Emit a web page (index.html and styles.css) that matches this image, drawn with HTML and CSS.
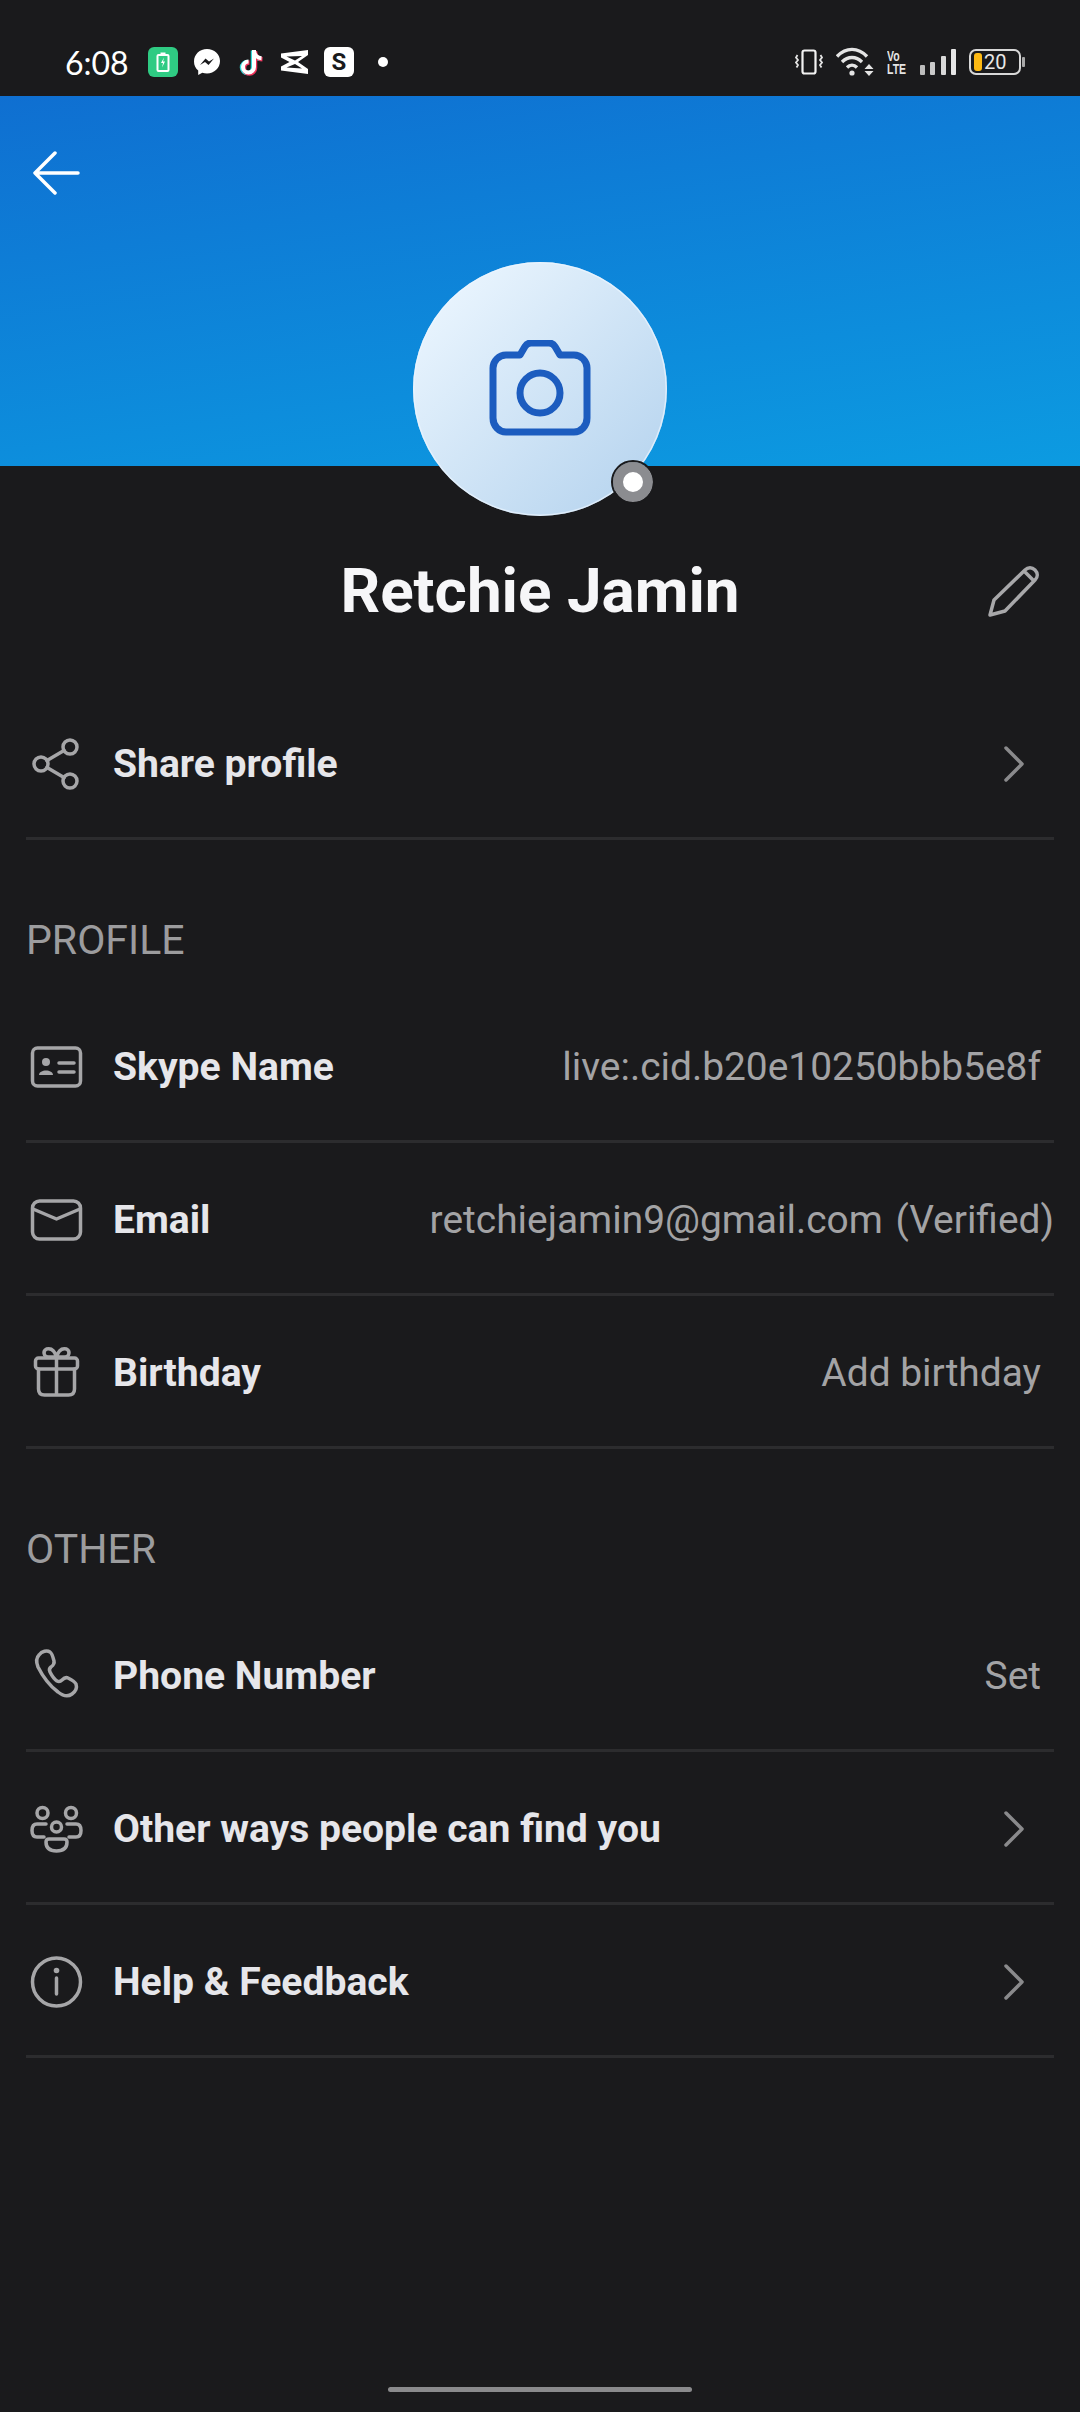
FILE: index.html
```html
<!DOCTYPE html>
<html lang="en">
<head>
    <meta charset="UTF-8">
    <meta name="viewport" content="width=device-width, initial-scale=1.0">
    <title>Profile</title>
    <link rel="stylesheet" href="styles.css">
</head>
<body>
    <div class="status-bar">
        <span class="time">6:08</span>
        <div class="status-apps">
            <svg class="app-icon" viewBox="0 0 30 30">
                <rect width="30" height="30" rx="6" fill="#2fcb83"/>
                <rect x="9.500" y="8" width="11" height="16" rx="1" fill="none" stroke="#fff" stroke-width="2"/>
                <rect x="12.500" y="5.500" width="5" height="2" fill="#fff"/>
                <path d="M16 10.500l-3 5.500h2l-1 4.500 3-6h-2z" fill="#fff"/>
            </svg>
            <svg class="app-icon" viewBox="0 0 30 30">
                <path d="M15 2C7.700 2 2 7.400 2 14.400c0 3.700 1.500 6.900 4.200 9.100V28l4.100-2.300c1.500.4 3 .7 4.700.7 7.300 0 13-5.400 13-12.400S22.300 2 15 2z" fill="#fff"/>
                <path d="M8 18l5.500-6.500 3.500 3 5-3-5.500 6.500-3.500-3z" fill="#1a1a1c"/>
            </svg>
            <svg class="app-icon" viewBox="0 0 30 30">
                <path d="M18 3v17a5.500 5.500 0 1 1-5.500-5.500M18 4c.5 4 3.500 7 7.500 7.300" fill="none" stroke="#33d9dc" stroke-width="4.500" transform="translate(-1 .6)"/>
                <path d="M18 3v17a5.500 5.500 0 1 1-5.500-5.500M18 4c.5 4 3.500 7 7.500 7.300" fill="none" stroke="#f0325a" stroke-width="4.500" transform="translate(1 1)"/>
                <path d="M18 3v17a5.500 5.500 0 1 1-5.500-5.500M18 4c.5 4 3.500 7 7.500 7.300" fill="none" stroke="#fff" stroke-width="4"/>
            </svg>
            <svg class="app-icon" viewBox="0 0 30 30">
                <path d="M1 6.500l27-3.500v5l-10 7 10 7v5L1 23.500v-4l8.500-4.500L1 10.500zM6.500 9.500l8.500 4 7-4.500zM6.500 20.500l15.500 1-7-4.500z" fill="#fff" fill-rule="evenodd"/>
            </svg>
            <span class="s-tile">S</span>
            <span class="status-dot"></span>
        </div>
        <div class="status-system">
            <svg class="sys-vibrate" viewBox="0 0 28 26">
                <rect x="7.500" y="1.500" width="13" height="23" rx="2" fill="none" stroke="#f2f2f2" stroke-width="2.200"/>
                <path d="M2.500 6l-1.500 2.500 2 2.500-2 2.500 2 2.500-1.500 2.500M25.500 6l1.500 2.500-2 2.500 2 2.500-2 2.500 1.500 2.500" fill="none" stroke="#e4e4e4" stroke-width="1.800"/>
            </svg>
            <svg class="sys-wifi" viewBox="0 0 38 30">
                <path d="M1 9.500c9-9.500 21-9.500 30 0M6 15c6-6 14-6 20 0M11 20.500c3-3 7-3 10 0" fill="none" stroke="#e4e4e4" stroke-width="3.400"/>
                <circle cx="16" cy="26" r="2.600" fill="#e4e4e4"/>
                <path d="M33 17l4.500 5h-9zM33 29l-4.500-5h9z" fill="#e4e4e4"/>
            </svg>
            <span class="volte">Vo<br>LTE</span>
            <div class="signal">
                <span class="signal-bar bar-1"></span>
                <span class="signal-bar bar-2"></span>
                <span class="signal-bar bar-3"></span>
                <span class="signal-bar bar-4"></span>
            </div>
            <div class="battery">
                <span class="battery-fill"></span>
                <span class="battery-level">20</span>
            </div>
        </div>
    </div>

    <div class="header">
        <svg class="back-icon" viewBox="0 0 48 44">
            <path d="M46 22H3M23 2L3 22l20 20" fill="none" stroke="#fff" stroke-width="3.500" stroke-linecap="round" stroke-linejoin="round"/>
        </svg>
        <div class="avatar">
            <svg class="camera-icon" viewBox="0 0 102 96">
                <path d="M31 15l5-8.500c1.500-2.500 3.500-3.500 6-3.500h18c2.500 0 4.500 1 6 3.500l5 8.500h14c7 0 13 6 13 13v50c0 8-6 14-13 14H17C10 92 4 86 4 78V28c0-7 6-13 13-13z" fill="none" stroke="#1c5cbf" stroke-width="7" stroke-linejoin="round"/>
                <circle cx="51" cy="53" r="20" fill="none" stroke="#1c5cbf" stroke-width="7"/>
            </svg>
        </div>
        <span class="presence"></span>
    </div>

    <div class="name-row">
        <h1 class="name">Retchie Jamin</h1>
        <svg class="edit-icon" viewBox="0 0 52 52">
            <path d="M2 50l4-15L37 5c3-3 7-3 10 0s3 7 0 10L17 46zM36 6l10 10" fill="none" stroke="#a8a8aa" stroke-width="3.500" stroke-linejoin="round"/>
        </svg>
    </div>

    <div class="row">
        <svg class="row-icon" viewBox="0 0 60 60">
            <circle cx="15" cy="30" r="7" class="line"/>
            <circle cx="44" cy="13" r="7" class="line"/>
            <circle cx="44" cy="47" r="7" class="line"/>
            <path d="M21 26.500l17-10M21 33.500l17 10" class="line"/>
        </svg>
        <span class="row-label">Share profile</span>
        <svg class="chevron" viewBox="0 0 20 36"><path d="M2 2l16 16L2 34"/></svg>
    </div>

    <div class="section-title">PROFILE</div>

    <div class="row">
        <svg class="row-icon" viewBox="0 0 60 60">
            <rect x="6.500" y="11" width="48" height="38" rx="5" class="line"/>
            <circle cx="20" cy="25" r="4" class="fill"/>
            <path d="M13 38c0-6 14-6 14 0z" class="fill"/>
            <path d="M33 26h15M33 35h15" class="line"/>
        </svg>
        <span class="row-label">Skype Name</span>
        <span class="row-value">live:.cid.b20e10250bbb5e8f</span>
    </div>

    <div class="row">
        <svg class="row-icon" viewBox="0 0 60 60">
            <rect x="6.500" y="11" width="48" height="38" rx="7" class="line"/>
            <path d="M7 19l23.500 10L54 19" class="line"/>
        </svg>
        <span class="row-label">Email</span>
        <span class="row-value row-value-wide">retchiejamin9@gmail.com (Verified)</span>
    </div>

    <div class="row">
        <svg class="row-icon" viewBox="0 0 60 60">
            <rect x="9.500" y="15" width="42" height="11" rx="3" class="line"/>
            <path d="M12.500 26v20c0 4 2 6 6 6h24c4 0 6-2 6-6V26M30.500 15v37" class="line"/>
            <path d="M30.500 14c-2-7-6-9-10-8-4 2-3 8 2 8zM30.500 14c2-7 6-9 10-8 4 2 3 8-2 8z" class="line"/>
        </svg>
        <span class="row-label">Birthday</span>
        <span class="row-value">Add birthday</span>
    </div>

    <div class="section-title">OTHER</div>

    <div class="row">
        <svg class="row-icon" viewBox="0 0 60 60">
            <path d="M13 9c3-4 8-5 11-3 2 1 3 5 4 9 .5 2-.5 4-3 6-2 1.500-2 3-1 5 2 4 4 7 7 9 2 1 3 1 5-1 2-2 4-3 6-2 4 2 7 4 8 6 1 3 0 7-4 10-4 3-9 2-14-2-8-6-15-15-20-25-2-5-2-9 1-12z" class="line"/>
        </svg>
        <span class="row-label">Phone Number</span>
        <span class="row-value">Set</span>
    </div>

    <div class="row">
        <svg class="row-icon" viewBox="0 0 60 60">
            <circle cx="16.500" cy="14" r="5.500" class="line"/>
            <circle cx="45" cy="14" r="5.500" class="line"/>
            <circle cx="30.500" cy="28" r="5" class="line"/>
            <path d="M20 25H11c-3 0-5 2-5 6.500s2 6.500 5 6.500h7M41 25h9c3 0 5 2 5 6.500s-2 6.500-5 6.500h-7" class="line"/>
            <path d="M23 40h15c2 0 3 1 3 3 0 6-4 9-10.500 9S20 49 20 43c0-2 1-3 3-3z" class="line"/>
        </svg>
        <span class="row-label">Other ways people can find you</span>
        <svg class="chevron" viewBox="0 0 20 36"><path d="M2 2l16 16L2 34"/></svg>
    </div>

    <div class="row">
        <svg class="row-icon" viewBox="0 0 60 60">
            <circle cx="30.500" cy="30" r="24" class="line"/>
            <circle cx="30.500" cy="18.500" r="2.800" class="fill"/>
            <path d="M30.500 26v16" class="line"/>
        </svg>
        <span class="row-label">Help &amp; Feedback</span>
        <svg class="chevron" viewBox="0 0 20 36"><path d="M2 2l16 16L2 34"/></svg>
    </div>

    <div class="home-bar"></div>
</body>
</html>
```

FILE: styles.css
```css
html, body {
    margin: 0;
    padding: 0;
}
body {
    width: 1080px;
    height: 2412px;
    position: relative;
    overflow: hidden;
    background-color: #1a1a1c;
    font-family: Roboto, sans-serif;
    color: #e6e6ea;
}

/* status bar */
.status-bar {
    height: 96px;
    padding: 28px 54px 0 65px;
    box-sizing: border-box;
    display: flex;
    align-items: center;
}
.time {
    font-family: Lato, sans-serif;
    font-size: 32px;
    color: #fff;
    width: 83px;
}
.status-apps {
    display: flex;
    align-items: center;
    gap: 14px;
}
.app-icon {
    width: 30px;
    height: 30px;
    display: block;
}
.s-tile {
    width: 30px;
    height: 30px;
    border-radius: 6px;
    background-color: #fff;
    color: #1a1a1c;
    font-size: 24px;
    font-weight: 700;
    line-height: 30px;
    text-align: center;
}
.status-dot {
    width: 10px;
    height: 10px;
    border-radius: 50%;
    background-color: #fff;
    margin-left: 10px;
}
.status-system {
    margin-left: auto;
    display: flex;
    align-items: center;
    gap: 13px;
}
.sys-vibrate {
    width: 28px;
    height: 26px;
}
.sys-wifi {
    width: 38px;
    height: 30px;
}
.volte {
    width: 20px;
    font-family: "Liberation Sans", sans-serif;
    font-size: 15px;
    font-weight: 700;
    line-height: 13px;
    color: #e4e4e4;
    transform: scaleX(0.7);
    transform-origin: left center;
    white-space: nowrap;
}
.signal {
    display: flex;
    align-items: flex-end;
    gap: 5.300px;
    height: 26px;
}
.signal-bar {
    width: 5px;
    border-radius: 1px;
}
.bar-1 { height: 10px; background-color: #bdbdbd; }
.bar-2 { height: 13px; background-color: #cacaca; }
.bar-3 { height: 19px; background-color: #d8d8d8; }
.bar-4 { height: 26px; background-color: #e6e6e6; }
.battery {
    width: 52px;
    height: 26px;
    box-sizing: border-box;
    border: 2px solid #d8d8d8;
    border-radius: 7px;
    display: flex;
    align-items: center;
    padding-left: 3px;
    gap: 2px;
    position: relative;
    margin-right: 5px;
}
.battery::after {
    content: "";
    position: absolute;
    right: -6px;
    top: 6px;
    width: 3px;
    height: 10px;
    background-color: #a8a8a8;
    border-radius: 1px;
}
.battery-fill {
    width: 8px;
    height: 18px;
    background-color: #fdb913;
    border-radius: 3px;
}
.battery-level {
    font-size: 20px;
    line-height: 22px;
    color: #e8e8e8;
}

/* header */
.header {
    height: 370px;
    background: linear-gradient(172deg, #0f6fd1 0%, #0c9be1 100%);
    padding: 55px 0 0 32px;
    box-sizing: border-box;
}
.back-icon {
    width: 48px;
    height: 44px;
    display: block;
}
.avatar {
    position: absolute;
    left: 413px;
    top: 262px;
    width: 254px;
    height: 254px;
    border-radius: 50%;
    background: linear-gradient(135deg, #eaf5fe 10%, #b8d5ef 90%);
    box-shadow: inset 0 0 0 1.500px rgba(235, 245, 255, 0.7);
    display: flex;
    align-items: center;
    justify-content: center;
}
.camera-icon {
    width: 102px;
    height: 96px;
    margin-top: -2px;
}
.presence {
    position: absolute;
    left: 613px;
    top: 462px;
    width: 20px;
    height: 20px;
    border: 10px solid #8b8c90;
    outline: 2px solid #1a1a1c;
    border-radius: 50%;
    background-color: #fff;
}

/* name */
.name-row {
    display: grid;
    grid-template-columns: 1fr auto 1fr;
    align-items: center;
    height: 70px;
    margin-top: 90px;
}
.name {
    grid-column: 2;
    margin: 0;
    font-size: 62px;
    font-weight: 700;
    line-height: 70px;
    color: #f6f6f8;
}
.edit-icon {
    grid-column: 3;
    justify-self: end;
    width: 52px;
    height: 52px;
    margin-right: 40px;
}

/* rows */
.row {
    height: 153px;
    margin: 0 26px;
    padding-top: 3px;
    border-bottom: 3px solid #2c2c2e;
    box-sizing: border-box;
    display: flex;
    align-items: center;
}
.name-row + .row {
    margin-top: 61px;
}
.row-icon {
    width: 60px;
    height: 60px;
    margin-right: 27px;
    flex-shrink: 0;
}
.row-icon .line {
    fill: none;
    stroke: #a6a6a8;
    stroke-width: 3.500;
    stroke-linecap: round;
    stroke-linejoin: round;
}
.row-icon .fill {
    fill: #a6a6a8;
}
.row-label {
    font-size: 39.100px;
    font-weight: 700;
    color: #e6e6ea;
}
.row-value {
    margin-left: auto;
    padding-right: 13px;
    font-size: 38.900px;
    font-weight: 400;
    color: #a3a3a5;
}
.row-value-wide {
    padding-right: 0;
    word-spacing: 3px;
}
.chevron {
    margin-left: auto;
    margin-right: 30px;
    width: 20px;
    height: 36px;
}
.chevron path {
    fill: none;
    stroke: #8a8a8c;
    stroke-width: 3.500;
    stroke-linecap: round;
    stroke-linejoin: round;
}
.section-title {
    height: 150px;
    padding: 75px 0 0 26px;
    box-sizing: border-box;
    font-size: 41px;
    font-weight: 400;
    line-height: 50px;
    color: #9c9c9e;
}

.home-bar {
    position: absolute;
    left: 388px;
    top: 2387px;
    width: 304px;
    height: 5px;
    border-radius: 3px;
    background-color: #8a8a8c;
}
```
